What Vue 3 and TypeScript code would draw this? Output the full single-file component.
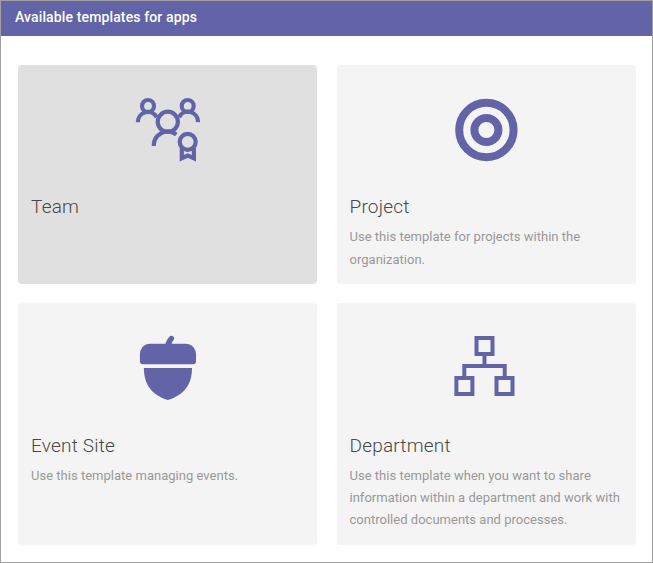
<script setup lang="ts">
interface Template {
  icon: 'team' | 'project' | 'event' | 'department'
  title: string
  description?: string
  selected?: boolean
}

const templates: Template[] = [
  { icon: 'team', title: 'Team', selected: true },
  { icon: 'project', title: 'Project', description: 'Use this template for projects within the organization.' },
  { icon: 'event', title: 'Event Site', description: 'Use this template managing events.' },
  {
    icon: 'department',
    title: 'Department',
    description:
      'Use this template when you want to share information within a department and work with controlled documents and processes.',
  },
]
</script>

<template>
  <main class="panel">
    <header class="header">Available templates for apps</header>
    <div class="grid">
      <article
        v-for="item in templates"
        :key="item.icon"
        class="card"
        :class="[item.icon, { selected: item.selected }]"
      >
        <svg class="icon" viewBox="0 0 65 65" aria-hidden="true">
          <g v-if="item.icon === 'team'" class="line people">
            <circle cx="13" cy="9" r="6" />
            <circle cx="52.7" cy="9" r="6" />
            <circle cx="32.8" cy="24.8" r="10.1" />
            <path d="M2.9 25.2A10 10 0 0 1 21.7 20.2M62.9 25.2A10 10 0 0 0 44 20.2" />
            <path d="M18.7 49A14 14 0 0 1 41.3 37.6" />
            <circle cx="52.7" cy="44.8" r="8" />
            <path d="M46.8 51V61.2L52.8 58.6L58.9 61.2V51" />
          </g>
          <g v-else-if="item.icon === 'project'" class="line">
            <circle cx="32.4" cy="33" r="27.2" class="thick" />
            <circle cx="32.4" cy="33" r="12" class="thick" />
          </g>
          <g v-else-if="item.icon === 'event'" class="solid">
            <path d="M30.2 10C31 6.5 32.5 4 34.3 1.8C36.5-.6 40.5 2 38.8 4.7C37.3 6.6 36.7 8 36.4 10Z" />
            <path d="M15 8.8H50.5C56.5 8.8 61 13.5 61 19.5V26.3Q61 29.3 58 29.3H7.9Q4.9 29.3 4.9 26.3V19.5C4.9 13.5 9.3 8.8 15 8.8Z" />
            <path d="M8.9 33H57C57 48 50.5 59.5 32.8 65C15.2 59.5 8.9 48 8.9 33Z" />
          </g>
          <g v-else class="line">
            <rect x="22.5" y="3" width="16" height="16" />
            <rect x="2.4" y="43" width="16" height="16" />
            <rect x="42.5" y="43" width="16" height="16" />
            <path d="M30.5 20V31M10.3 42V31H50.7V42" />
          </g>
        </svg>
        <h2 class="title">{{ item.title }}</h2>
        <p v-if="item.description" class="description">{{ item.description }}</p>
      </article>
    </div>
  </main>
</template>

<style>
body {
  margin: 0;
  background: #fff;
}
</style>

<style scoped>
.panel {
  box-sizing: border-box;
  height: 563px;
  border: 1px solid #a0a0a0;
  background: #fff;
  font-family: Roboto, sans-serif;
}

.header {
  box-sizing: border-box;
  height: 35px;
  padding-left: 14px;
  background: #6264a7;
  color: #fff;
  font-size: 14px;
  font-weight: 500;
  line-height: 32px;
  letter-spacing: 0.13px;
}

.grid {
  display: grid;
  grid-template-columns: 299px 299px;
  grid-template-rows: 219px 242px;
  gap: 19px 20px;
  padding: 29px 17px 0;
}

.card {
  box-sizing: border-box;
  display: flex;
  flex-direction: column;
  padding: 32px 13px 0;
  border-radius: 4px;
  background: #f4f4f4;
}

.project,
.department {
  padding: 32px 12.5px 0;
}

.selected {
  background: #e0e0e0;
}

.icon {
  flex: none;
  align-self: center;
  width: 65px;
  height: 65px;
}

.line {
  fill: none;
  stroke: #6264a7;
  stroke-width: 4;
}

.people {
  stroke-width: 4.2;
}

.thick {
  stroke-width: 8;
}

.solid {
  fill: #6264a7;
}

.title {
  margin: 33px 0 0;
  color: #484848;
  font-size: 19px;
  font-weight: 300;
  line-height: 24px;
  letter-spacing: 0.2px;
}

.event .title,
.department .title {
  margin-top: 34px;
}

.description {
  margin: 7px 0 0;
  color: #999;
  font-size: 13px;
  line-height: 22px;
  letter-spacing: 0.015px;
}

.project .description {
  margin-top: 6px;
  line-height: 23px;
}
</style>
